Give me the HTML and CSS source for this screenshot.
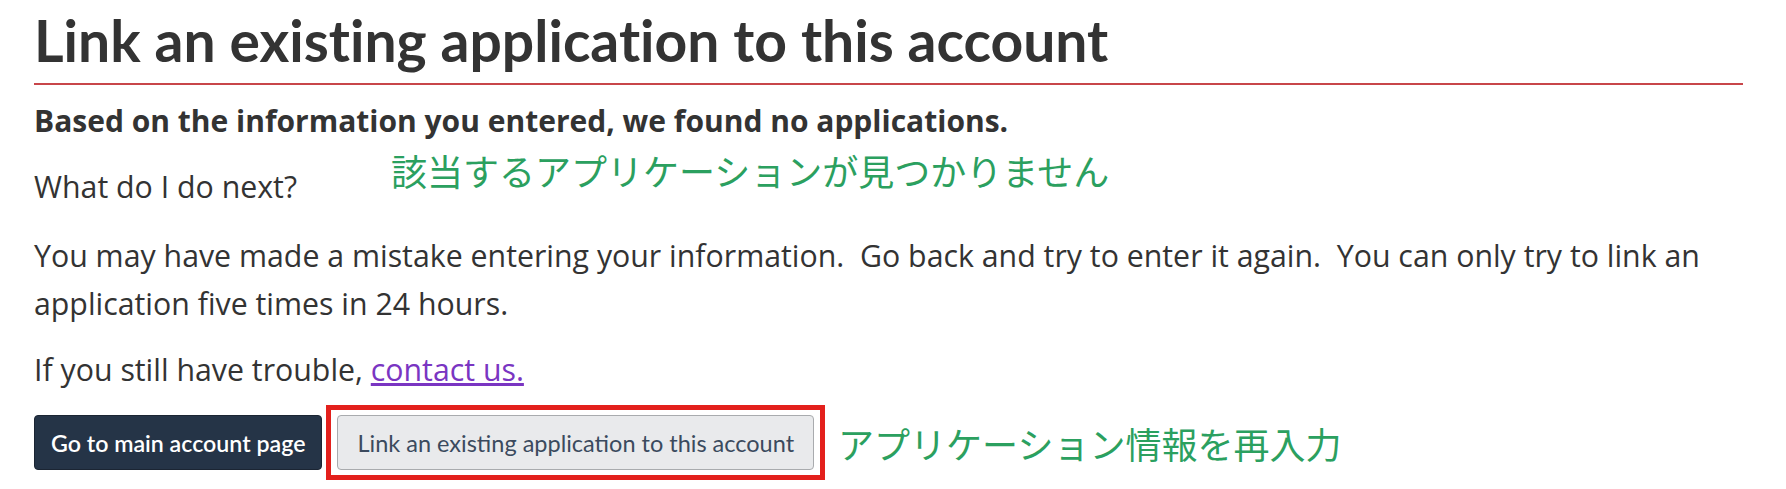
FILE: index.html
```html
<!DOCTYPE html>
<html lang="en">
<head>
<meta charset="utf-8">
<title>Link an existing application to this account</title>
<link rel="stylesheet" href="styles.css">
</head>
<body>
<main class="page">
  <h1 class="title">Link an existing application to this account</h1>
  <p class="lead">Based on the information you entered, we found no applications.</p>
  <p class="text question">What do I do next?</p>
  <span class="note note-top" lang="ja">該当するアプリケーションが見つかりません</span>
  <p class="text">You may have made a mistake entering your information.&nbsp; Go back and try to enter it again.&nbsp; You can only try to link an application five times in 24 hours.</p>
  <p class="text last">If you still have trouble, <a class="link" href="#">contact us.</a></p>
  <div class="actions">
    <button class="btn btn-primary" type="button">Go to main account page</button>
    <div class="highlight">
      <button class="btn btn-secondary" type="button">Link an existing application to this account</button>
    </div>
    <span class="note" lang="ja">アプリケーション情報を再入力</span>
  </div>
</main>
</body>
</html>
```

FILE: styles.css
```css
html, body {
  margin: 0;
  padding: 0;
  background: #ffffff;
}

.page {
  position: relative;
  padding: 0 43px 0 34px;
  color: #333333;
  font-family: "Open Sans", "Noto Sans", sans-serif;
}

.title {
  margin: 0;
  padding: 6px 0 9px;
  font-family: Lato, "Liberation Sans", sans-serif;
  font-weight: 700;
  font-size: 57px;
  line-height: 1.2;
  font-variant-ligatures: none;
  color: #333333;
  border-bottom: 2px solid #c8464a;
}

.lead {
  margin: 12px 0 18px;
  font-size: 30px;
  font-weight: 700;
  line-height: 48px;
}

.text {
  margin: 0 0 18px;
  font-size: 30.3px;
  line-height: 48px;
}

.text.question {
  margin-bottom: 21px;
}

.text.last {
  margin-bottom: 11px;
}

.link {
  color: #7a35c2;
  text-decoration: underline;
}

.note {
  font-family: "Noto Sans CJK JP", "Noto Sans", sans-serif;
  font-size: 36px;
  line-height: 1;
  color: #2ba05f;
  white-space: nowrap;
}

.note-top {
  position: absolute;
  left: 391px;
  top: 152px;
}

.actions {
  display: flex;
  align-items: center;
  gap: 4px;
}

.highlight {
  border: 5px solid #e3201c;
  padding: 5px 6px;
  margin-right: 9px;
  display: flex;
}

.btn {
  height: 55px;
  padding: 0 16px;
  border-radius: 4px;
  font-family: Lato, "Liberation Sans", sans-serif;
  font-size: 23.5px;
  cursor: pointer;
}

.btn-primary {
  background: #253447;
  color: #ffffff;
  border: 1px solid #1b2533;
  font-weight: 600;
  font-size: 23.2px;
}

.btn-secondary {
  background: #e9eaec;
  color: #3b4a5e;
  border: 1px solid #a9abae;
  font-weight: 400;
  padding: 0 19px;
}
```
